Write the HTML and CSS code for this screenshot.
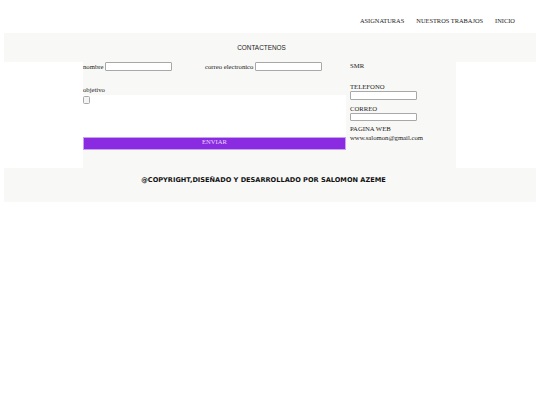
FILE: index.html
```html
<!DOCTYPE html>
<html lang="es">
<head>
<meta charset="utf-8">
<title>Contactenos</title>
<link rel="stylesheet" href="styles.css">
</head>
<body>
<nav class="nav">
  <a class="nav-link" href="#">ASIGNATURAS</a>
  <a class="nav-link" href="#">NUESTROS TRABAJOS</a>
  <a class="nav-link" href="#">INICIO</a>
</nav>
<header class="band band-head">
  <h1 class="band-title">CONTACTENOS</h1>
</header>
<main class="main">
  <form class="form">
    <div class="row">
      <label class="field">nombre <input class="input" type="text"></label>
      <label class="field field-mail">correo electronico <input class="input" type="text"></label>
    </div>
    <div class="obj-label">objetivo</div>
    <div class="obj-area"><span class="tiny-box"></span></div>
    <button class="btn" type="button">ENVIAR</button>
  </form>
  <aside class="info">
    <div class="info-line">SMR</div>
    <div class="info-line gap-lg">TELEFONO</div>
    <div class="input input-side"></div>
    <div class="info-line gap-sm">CORREO</div>
    <div class="input input-side"></div>
    <div class="info-line gap-xs">PAGINA WEB</div>
    <div class="info-line gap-tiny">www.salomon@gmail.com</div>
  </aside>
</main>
<footer class="band band-foot">
  <p class="foot-text">@COPYRIGHT,DISEÑADO Y DESARROLLADO POR SALOMON AZEME</p>
</footer>
</body>
</html>
```

FILE: styles.css
```css
html, body {
  margin: 0;
  padding: 0;
  background: #ffffff;
}
body {
  padding: 0 4px;
  font-family: "Liberation Serif", "Times New Roman", serif;
  font-size: 6.7px;
  color: #1a1a1a;
}
.nav {
  height: 33px;
  display: flex;
  justify-content: flex-end;
  align-items: center;
  gap: 12px;
  padding: 9px 21px 0 0;
  box-sizing: border-box;
}
.nav-link {
  color: #1a1a1a;
  text-decoration: none;
  font-size: 6.4px;
  line-height: 8px;
}
.band {
  background: #f8f8f6;
}
.band-head {
  height: 29px;
  display: flex;
  align-items: center;
  justify-content: center;
  padding-right: 17px;
}
.band-title {
  margin: 0;
  font-family: "Liberation Sans", Arial, sans-serif;
  font-weight: normal;
  font-size: 6.4px;
  line-height: 8px;
  color: #1a1a1a;
}
.main {
  margin-left: 79px;
  width: 373px;
  height: 106px;
  background: #f8f8f6;
  display: flex;
}
.form {
  width: 263px;
  display: flex;
  flex-direction: column;
}
.row {
  display: flex;
  height: 9px;
  align-items: center;
}
.field {
  display: flex;
  align-items: center;
  gap: 1.5px;
  line-height: 8px;
}
.field-mail {
  margin-left: 33px;
}
.input {
  display: block;
  box-sizing: border-box;
  width: 67px;
  height: 9px;
  padding: 0;
  border: 1px solid #a8a8a8;
  border-radius: 1px;
  background: #fff;
  font-size: 6px;
}
.obj-label {
  margin-top: 15px;
  line-height: 8px;
}
.obj-area {
  margin-top: 1px;
  height: 42px;
  background: #ffffff;
  padding-top: 1px;
  box-sizing: border-box;
}
.tiny-box {
  display: block;
  width: 7px;
  height: 8px;
  box-sizing: border-box;
  border: 1px solid #a8a8a8;
  border-radius: 1.5px;
  background: #f4f4f4;
}
.btn {
  display: block;
  width: 100%;
  height: 13px;
  margin: 0;
  padding: 0 0 3px;
  border: 1px solid #c6a2f0;
  background: #8a2be2;
  color: #e6d8fa;
  font-family: "Liberation Serif", "Times New Roman", serif;
  font-size: 6.6px;
  line-height: 8px;
}
.info {
  padding-left: 4px;
  display: flex;
  flex-direction: column;
  width: 110px;
  box-sizing: border-box;
}
.info-line {
  line-height: 8px;
  white-space: nowrap;
}
.gap-lg { margin-top: 13px; }
.gap-sm { margin-top: 5px; }
.gap-xs { margin-top: 4px; }
.gap-tiny { margin-top: 0.6px; }
.input-side {
  height: 8.5px;
}
.band-foot {
  height: 34px;
  padding-right: 13px;
  box-sizing: border-box;
  padding-top: 7.5px;
  text-align: center;
}
.foot-text {
  margin: 0;
  font-family: "DejaVu Sans", Verdana, sans-serif;
  font-weight: bold;
  font-size: 6.6px;
  line-height: 8px;
  color: #111;
}
```
